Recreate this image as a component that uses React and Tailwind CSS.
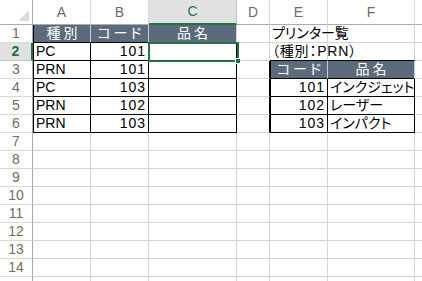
const cols = ["A", "B", "C", "D", "E", "F", "G"];

const font = "font-['Liberation_Sans','Noto_Sans_CJK_JP',sans-serif] [font-feature-settings:'palt']";

// content of the sheet: key = col+row
const cells = {
  A1: { text: "種別", head: true },
  B1: { text: "コード", head: true },
  C1: { text: "品名", head: true },
  A2: { text: "PC" }, B2: { text: "101", num: true },
  A3: { text: "PRN" }, B3: { text: "101", num: true },
  A4: { text: "PC" }, B4: { text: "103", num: true },
  A5: { text: "PRN" }, B5: { text: "102", num: true },
  A6: { text: "PRN" }, B6: { text: "103", num: true },
  E1: { text: "プリンター覧", plain: true },
  E2: { text: "（種別：PRN）", plain: true, wide: true },
  E3: { text: "コード", head: true },
  F3: { text: "品名", head: true },
  E4: { text: "101", num: true }, F4: { text: "インクジェット" },
  E5: { text: "102", num: true }, F5: { text: "レーザー" },
  E6: { text: "103", num: true }, F6: { text: "インパクト" },
};

const inTable = (c, r) =>
  (["A", "B", "C"].includes(c) && r >= 1 && r <= 6) ||
  (["E", "F"].includes(c) && r >= 3 && r <= 6);

function Cell({ c, r }) {
  const data = cells[c + r];
  const boxed = inTable(c, r);
  const isHead = data?.head;
  let cls = "relative flex items-center overflow-visible whitespace-nowrap border-r border-b ";
  cls += boxed ? "border-black " : "border-[#d4d4d4] ";
  // left edge of the tables
  if ((c === "A" && r <= 6) || (c === "E" && r >= 3 && r <= 6)) cls += "border-l border-l-black ";
  // top edge of the small table
  if (["E", "F"].includes(c) && r === 2) cls += "border-b-black ";
  if (c === "D" && r >= 3 && r <= 6) cls += "border-r-black ";
  if (isHead) cls += "bg-[#5b6b7c] text-white justify-center border-r-[#c8ccd2] ";
  if (c === "C" && r === 1) cls += "border-r-[#d4d4d4] ";
  if (data?.num) cls += "justify-end pr-[2px] tracking-[1px] ";
  else if (!isHead) cls += "pl-[2px] ";
  return (
    <div className={cls + "text-[14px] text-black " + font}>
      {data && (
        <span className={isHead ? "tracking-[3px] pl-[3px]" : data.wide ? "tracking-[0.8px]" : ""}>
          {data.text}
        </span>
      )}
      {c === "C" && r === 2 && (
        <div className="absolute -left-[1px] -top-[1px] w-[91px] h-[20px] border-2 border-[#217346] z-10">
          <div className="absolute -right-[4px] -bottom-[4px] w-[6px] h-[6px] bg-[#217346] border border-white" />
        </div>
      )}
    </div>
  );
}

export default function App() {
  const rows = Array.from({ length: 15 }, (_, i) => i + 1);
  return (
    <div className="w-[422px] h-[281px] overflow-hidden bg-white">
      <div className="grid grid-cols-[33px_58px_58px_88px_33px_58px_87px_40px] grid-rows-[25px_repeat(15,18px)]">
        {/* corner */}
        <div className="relative border-r border-b border-[#ababab] bg-white">
          <svg className="absolute right-[3px] bottom-[3px]" width="11" height="11" viewBox="0 0 11 11">
            <polygon points="11,0 11,11 0,11" fill="#dcdcdc" />
          </svg>
        </div>
        {cols.map((c) => (
          <div
            key={c}
            className={
              "flex items-center justify-center text-[14px] border-r " +
              font +
              (c === "C"
                ? " bg-[#e1e1e1] text-[#217346] border-b-2 border-b-[#217346] border-r-[#c6c6c6]"
                : " bg-white text-[#6b6b6b] border-b border-b-[#ababab] border-r-[#dadada]")
            }
          >
            {c}
          </div>
        ))}
        {rows.map((r) => (
          <div key={r} className="contents">
            <div
              className={
                "flex items-center justify-center text-[14px] border-b " +
                font +
                (r === 2
                  ? " bg-[#e1e1e1] text-[#217346] border-r-2 border-r-[#217346] border-b-[#c6c6c6] font-bold"
                  : " bg-white text-[#7a6a5a] border-r border-r-[#ababab] border-b-[#dadada]")
              }
            >
              {r < 15 ? r : ""}
            </div>
            {cols.map((c) => (
              <Cell key={c + r} c={c} r={r} />
            ))}
          </div>
        ))}
      </div>
    </div>
  );
}
